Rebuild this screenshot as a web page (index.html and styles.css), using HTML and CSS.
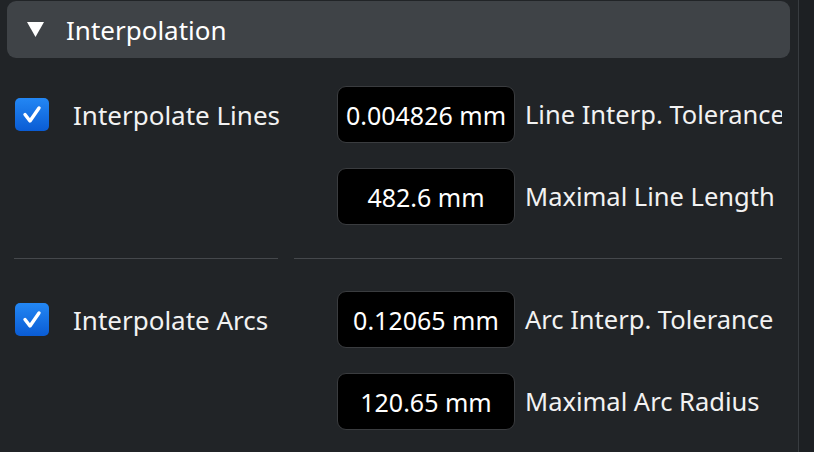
FILE: index.html
```html
<!DOCTYPE html>
<html>
<head>
<meta charset="utf-8">
<link rel="stylesheet" href="styles.css">
</head>
<body>
<div class="app">
  <div class="panel">
    <div class="header">
      <svg class="tri" width="17" height="15" viewBox="0 0 17 15"><polygon points="0,0 17,0 8.5,15" fill="#ffffff"/></svg>
      <span class="title">Interpolation</span>
    </div>
    <div class="group first">
      <div class="row">
        <div class="left">
          <span class="check"><svg width="34" height="33" viewBox="0 0 34 33"><polyline points="10,16.5 15,23 24,10" fill="none" stroke="#ffffff" stroke-width="3.4" stroke-linecap="round" stroke-linejoin="round"/></svg></span>
          <span class="label">Interpolate Lines</span>
        </div>
        <div class="right">
          <div class="field">0.004826 mm</div>
          <span class="label clip">Line Interp. Tolerance</span>
        </div>
      </div>
      <div class="row">
        <div class="left"></div>
        <div class="right">
          <div class="field">482.6 mm</div>
          <span class="label clip">Maximal Line Length</span>
        </div>
      </div>
    </div>
    <div class="sep"><div class="seg seg-left"></div><div class="seg seg-right"></div></div>
    <div class="group second">
      <div class="row">
        <div class="left">
          <span class="check"><svg width="34" height="33" viewBox="0 0 34 33"><polyline points="10,16.5 15,23 24,10" fill="none" stroke="#ffffff" stroke-width="3.4" stroke-linecap="round" stroke-linejoin="round"/></svg></span>
          <span class="label">Interpolate Arcs</span>
        </div>
        <div class="right">
          <div class="field">0.12065 mm</div>
          <span class="label clip">Arc Interp. Tolerance</span>
        </div>
      </div>
      <div class="row">
        <div class="left"></div>
        <div class="right">
          <div class="field">120.65 mm</div>
          <span class="label clip">Maximal Arc Radius</span>
        </div>
      </div>
    </div>
  </div>
  <div class="scrollbar"></div>
</div>
</body>
</html>
```

FILE: styles.css
```css
* { box-sizing: border-box; }
html, body {
  margin: 0;
  padding: 0;
  width: 814px;
  height: 452px;
  overflow: hidden;
  background: #212427;
  font-family: "Noto Sans", "Open Sans", sans-serif;
  color: #f2f2f2;
}
.app {
  display: flex;
  width: 814px;
  height: 452px;
}
.panel {
  width: 798px;
  height: 452px;
  background: #212427;
  padding-top: 1px;
}
.scrollbar {
  width: 16px;
  height: 452px;
  background: #1d2023;
  border-left: 1px solid #383c40;
}
.header {
  margin-left: 7px;
  width: 783px;
  height: 57px;
  background: #3f4347;
  border-radius: 9px;
  display: flex;
  align-items: center;
  padding-left: 20px;
}
.tri {
  display: block;
  margin-right: 22px;
  margin-top: -1px;
}
.title {
  font-size: 26px;
  line-height: 1;
  color: #ffffff;
}
.group {
  display: flex;
  flex-direction: column;
  gap: 25px;
}
.group.first { margin-top: 28px; }
.group.second { margin-top: 32px; }
.row {
  display: flex;
  align-items: center;
  height: 57px;
  padding-left: 14px;
  gap: 16px;
}
.left {
  width: 264px;
  display: flex;
  align-items: center;
}
.check {
  width: 34px;
  height: 33px;
  margin-left: 1px;
  border-radius: 5px;
  background: linear-gradient(#2387f4, #0a5cd4);
  display: block;
}
.check svg { display: block; }
.label {
  font-size: 25.5px;
  line-height: 1;
  white-space: nowrap;
}
.left .label { margin-left: 24px; font-size: 26px; }
.right {
  width: 488px;
  display: flex;
  align-items: center;
  padding-left: 43px;
  overflow: hidden;
}
.field {
  flex: none;
  width: 178px;
  height: 57px;
  background: #000000;
  border: 1px solid #3a3c3f;
  border-radius: 9px;
  display: flex;
  align-items: center;
  justify-content: center;
  font-size: 25px;
  color: #ffffff;
}
.right .label { margin-left: 10px; }
.sep {
  display: flex;
  gap: 16px;
  padding-left: 14px;
  margin-top: 33px;
}
.seg {
  height: 1px;
  background: #45484c;
}
.seg-left { width: 264px; }
.seg-right { width: 488px; }
```
